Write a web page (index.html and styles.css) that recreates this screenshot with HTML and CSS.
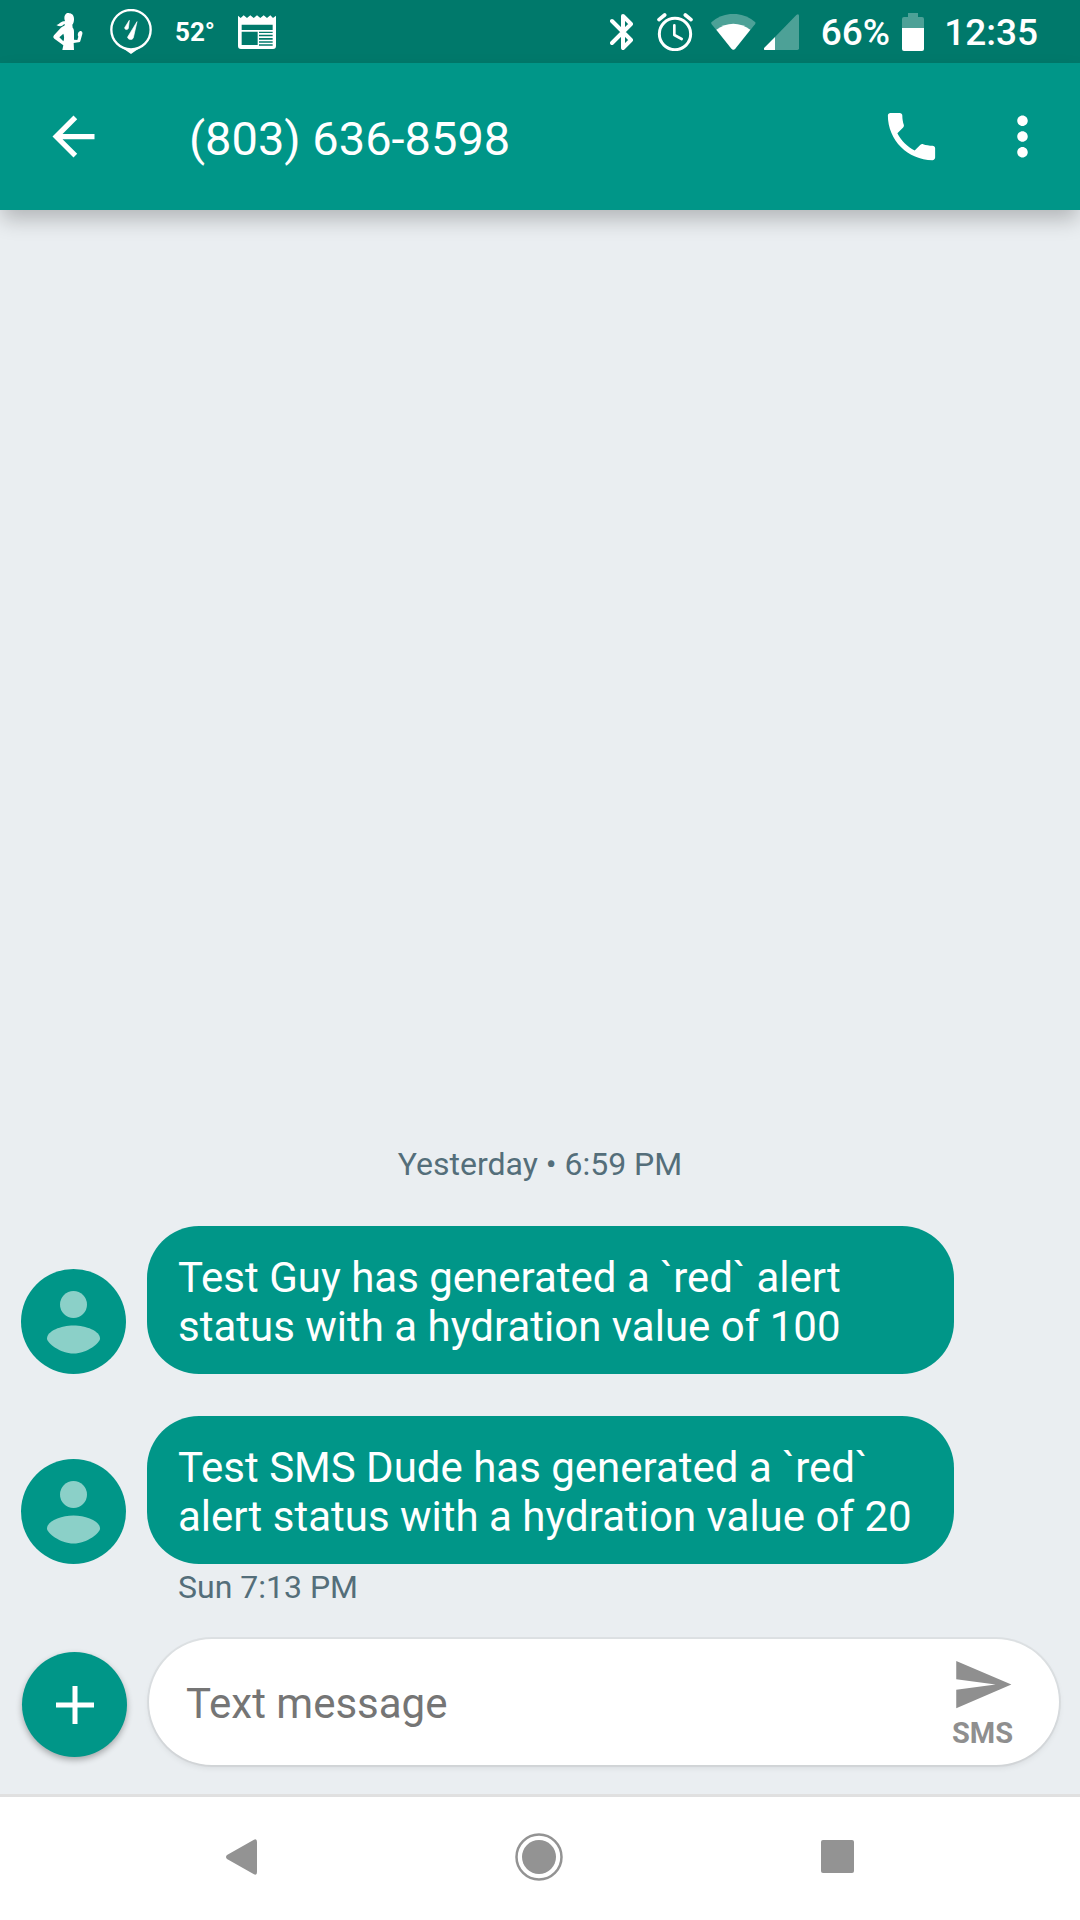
FILE: index.html
```html
<!DOCTYPE html>
<html lang="en">
<head>
<meta charset="utf-8">
<meta name="viewport" content="width=device-width, initial-scale=1">
<title>(803) 636-8598</title>
<link rel="stylesheet" href="styles.css">
</head>
<body>
<div class="screen">
  <div class="status-bar">
    <div class="status-group status-left">
      <svg width="30" height="38" viewBox="70 39 90 114" fill="#fff" aria-hidden="true">
        <path d="M118 40c10 0 15 7 15 17 0 9-2 14-5 17l1 9c3 3 4 6 4 12v24l10 1 3-10c-4-6 0-16 6-17 5-1 7 4 6 9l-6 21c-1 3-3 4-6 4l-14 2 1 21H98l3-14-27-20c-4-3-4-6-1-10l20-22c4-3 6-5 10-6l3-4-3-2c-4 7-12 9-23 3 9-1 12-10 22-11 2 0 3 0 4-1-5-12 0-25 12-25zM101 101l-12 11 12 12c3-7 3-15 0-23z"/>
      </svg>
      <svg class="s-pin" width="42" height="45" viewBox="240 26 126 135" fill="none" stroke="#fff" aria-hidden="true">
        <circle cx="303" cy="88" r="59" stroke-width="7"/>
        <path d="M272 139l31 22 31-22c-18 10-44 10-62 0z" fill="#fff" stroke="none"/>
        <path d="M321 64l-28 46c-1 8 14 11 17 2zM298 60l-14 22c0 6 8 8 11 2z" fill="#fff" stroke="#fff" stroke-width="2" stroke-linejoin="round"/>
      </svg>
      <span class="status-temp">52°</span>
      <svg width="38" height="34" viewBox="625 43 114 102" aria-hidden="true">
        <path fill="#fff" fill-rule="evenodd" d="M625 45l8 7 9-8 10 8 10-8 10 8 10-8 10 8 10-8 10 8 10-8 8 8 9-7v91q0 9-9 9H634q-9 0-9-9zM636 72v16h93V72zM636 93v40h48V93zM688 93v4h41v-4zM688 102v5h41v-5zM688 112v5h41v-5zM688 122v4h41v-4zM688 131v4h41v-4z"/>
      </svg>
    </div>
    <div class="status-group">
      <svg class="s-bt" width="24" height="38" viewBox="0 0 24 38" fill="none" stroke="#fff" stroke-width="4" stroke-linecap="round" stroke-linejoin="round" aria-hidden="true">
        <path d="M2 8l19 19-8 8V3l8 8L2 30"/>
      </svg>
      <svg class="s-alarm" width="36" height="38" viewBox="200 38 108 114" fill="none" stroke="#fff" stroke-linecap="round" stroke-linejoin="round" aria-hidden="true">
        <circle cx="254" cy="101" r="47" stroke-width="9"/>
        <path d="M252 75v29l22 12" stroke-width="8"/>
        <path d="M206 58l17-14M302 58l-17-14" stroke-width="11"/>
      </svg>
      <svg class="s-wifi" width="45" height="36" viewBox="365 39 135 108" fill="#fff" aria-hidden="true">
        <path opacity=".3" d="M366 64c38-34 94-34 132 0q1 3-1 6l-60 74q-5 5-10 0l-60-74q-2-3-1-6z"/>
        <path d="M381 86c31-24 71-24 102 0l-46 58q-5 5-10 0z"/>
      </svg>
      <svg class="s-cell" width="35" height="36" viewBox="522 43 105 108" fill="#fff" aria-hidden="true">
        <path opacity=".3" d="M555 151V112l64-66q8-5 8 3v97q0 5-5 5z"/>
        <path d="M555 112v39h-29q-7-1-3-7z"/>
      </svg>
      <span class="status-text s-pct">66%</span>
      <svg class="s-batt" width="22" height="38" viewBox="0 0 22 38" fill="#fff" aria-hidden="true">
        <path opacity=".3" d="M6 0h10v4h4q2 0 2 2v9H0V6q0-2 2-2h4z"/>
        <path d="M0 15h22v21q0 2-2 2H2q-2 0-2-2z"/>
      </svg>
      <span class="status-text">12:35</span>
    </div>
  </div>

  <header class="app-bar">
    <button class="icon-button" type="button" aria-label="Back">
      <svg class="icon" viewBox="0 0 24 24"><path d="M20 11H7.83l5.59-5.59L12 4l-8 8 8 8 1.41-1.41L7.83 13H20v-2z"/></svg>
    </button>
    <h1 class="title">(803) 636-8598</h1>
    <button class="icon-button" type="button" aria-label="Call">
      <svg class="icon" viewBox="0 0 24 24"><path d="M6.62 10.79c1.44 2.83 3.76 5.14 6.59 6.59l2.2-2.2c.27-.27.67-.36 1.02-.24 1.12.37 2.33.57 3.57.57.55 0 1 .45 1 1V20c0 .55-.45 1-1 1-9.39 0-17-7.61-17-17 0-.55.45-1 1-1h3.5c.55 0 1 .45 1 1 0 1.25.2 2.45.57 3.57.11.35.03.74-.25 1.02l-2.2 2.2z"/></svg>
    </button>
    <button class="icon-button" type="button" aria-label="More options">
      <svg class="icon" viewBox="0 0 24 24"><path d="M12 8c1.100 0 2-.9 2-2s-.9-2-2-2-2 .9-2 2 .9 2 2 2zm0 2c-1.100 0-2 .9-2 2s.9 2 2 2 2-.9 2-2-.9-2-2-2zm0 6c-1.100 0-2 .9-2 2s.9 2 2 2 2-.9 2-2-.9-2-2-2z"/></svg>
    </button>
  </header>

  <main class="thread">
    <p class="thread-date">Yesterday • 6:59 PM</p>
    <article class="message">
      <svg class="avatar" viewBox="0 0 105 105" aria-hidden="true">
        <circle cx="52.500" cy="52.500" r="52.500" fill="#009688"/>
        <g fill="#8bd0c8"><circle cx="52.500" cy="35.500" r="13.500"/><path d="M26 69.500C26 62 40 56.500 52.500 56.500S79 62 79 69.500C79 74 66 84.500 52.500 84.500S26 74 26 69.500z"/></g>
      </svg>
      <p class="bubble">Test Guy has generated a `red` alert status with a hydration value of 100</p>
    </article>
    <article class="message">
      <svg class="avatar" viewBox="0 0 105 105" aria-hidden="true">
        <circle cx="52.500" cy="52.500" r="52.500" fill="#009688"/>
        <g fill="#8bd0c8"><circle cx="52.500" cy="35.500" r="13.500"/><path d="M26 69.500C26 62 40 56.500 52.500 56.500S79 62 79 69.500C79 74 66 84.500 52.500 84.500S26 74 26 69.500z"/></g>
      </svg>
      <p class="bubble">Test SMS Dude has generated a `red` alert status with a hydration value of 20</p>
    </article>
    <p class="message-time">Sun 7:13 PM</p>
  </main>

  <form class="compose">
    <button class="attach" type="button" aria-label="Attach">
      <svg width="38" height="38" viewBox="0 0 38 38" stroke="#fff" stroke-width="5"><path d="M19 0v38M0 19h38"/></svg>
    </button>
    <div class="compose-box">
      <input class="compose-input" type="text" aria-label="Text message" placeholder="Text message">
      <button class="send" type="button">
        <svg class="icon" viewBox="0 0 24 24" aria-hidden="true"><path d="M2 3l21 9-21 9v-7l15-2-15-2z"/></svg>
        <span>SMS</span>
      </button>
    </div>
  </form>

  <nav class="nav-bar">
    <button class="nav-button" type="button" aria-label="Back">
      <svg width="31" height="36" viewBox="0 0 31 36"><path d="M27.500 1Q31-1 31 3v30q0 4-3.500 2L1 20q-2-2 0-4z"/></svg>
    </button>
    <button class="nav-button" type="button" aria-label="Home">
      <svg width="48" height="48" viewBox="0 0 48 48"><circle cx="24" cy="24" r="22.500" fill="none" stroke="#939393" stroke-width="2.500"/><circle cx="24" cy="24" r="17"/></svg>
    </button>
    <button class="nav-button" type="button" aria-label="Recent apps">
      <svg width="33" height="33" viewBox="0 0 33 33"><rect width="33" height="33" rx="2"/></svg>
    </button>
  </nav>
</div>
</body>
</html>
```
FILE: styles.css
```css
* {
  box-sizing: border-box;
}

body {
  margin: 0;
  background: #eaeef1;
  font-family: Roboto, "Liberation Sans", sans-serif;
}

h1,
p {
  margin: 0;
  font-weight: 400;
}

button {
  padding: 0;
  border: 0;
  background: none;
  font: inherit;
}

svg {
  display: block;
  flex: none;
}

.screen {
  display: flex;
  flex-direction: column;
  min-height: 100vh;
}

.status-bar {
  display: flex;
  justify-content: space-between;
  height: 63px;
  padding: 0 42px 0 53px;
  background: #00796b;
  color: #fff;
}

.status-group {
  display: flex;
  align-items: center;
}

.status-left {
  gap: 23px;
}

.s-pin {
  margin-left: 4px;
}

.status-temp {
  font-size: 26px;
  font-weight: 700;
  line-height: 32px;
}

.status-text {
  padding-top: 2px;
  font-size: 37px;
  font-weight: 500;
  line-height: 44px;
}

.s-bt { margin-right: 23px; }
.s-alarm { margin-right: 18px; }
.s-wifi { margin-right: 8px; }
.s-cell { margin-right: 22px; }
.s-pct { margin-right: 12px; }
.s-batt { margin-right: 20px; }

.app-bar {
  position: relative;
  display: flex;
  align-items: center;
  gap: 48px;
  height: 147px;
  padding: 0 26px 0 42px;
  background: #009688;
  color: #fff;
  box-shadow: 0 11px 20px -2px rgba(0, 0, 0, 0.24);
}

.icon {
  width: 63px;
  height: 63px;
  fill: currentColor;
}

.icon-button {
  color: inherit;
}

.title {
  flex: 1;
  padding: 4px 0 0 36px;
  font-size: 47px;
  line-height: 56px;
}

.thread {
  display: flex;
  flex: 1;
  flex-direction: column;
  justify-content: flex-end;
  padding: 32px 126px 20px 21px;
}

.thread-date,
.message-time {
  color: #546e7a;
  font-size: 32px;
  line-height: 38px;
}

.thread-date {
  margin: 0 -105px 43px 0;
  text-align: center;
}

.message {
  display: flex;
  align-items: flex-end;
  gap: 21px;
}

.message + .message {
  margin-top: 42px;
}

.avatar {
  width: 105px;
  height: 105px;
}

.bubble {
  flex: 1;
  padding: 27px 31px 23px;
  border-radius: 52px;
  background: #009688;
  color: #fff;
  font-size: 42px;
  line-height: 49px;
}

.message-time {
  margin: 4px 0 0 157px;
}

.compose {
  display: flex;
  align-items: flex-end;
  gap: 22px;
  padding: 13px 21px 29px 22px;
}

.attach {
  display: grid;
  flex: none;
  place-items: center;
  width: 105px;
  height: 105px;
  margin-bottom: 8px;
  border-radius: 50%;
  background: #009688;
  box-shadow: 0 3px 6px rgba(0, 0, 0, 0.3);
}

.compose-box {
  display: flex;
  flex: 1;
  align-items: center;
  height: 126px;
  padding: 0 45px 0 37px;
  border-radius: 63px;
  background: #fff;
  box-shadow: 0 0 0 2px rgba(0, 0, 0, 0.05), 0 3px 6px rgba(0, 0, 0, 0.08);
}

.compose-input {
  flex: 1;
  min-width: 0;
  padding: 2px 0 0;
  border: 0;
  outline: 0;
  background: none;
  font: inherit;
  font-size: 42px;
  line-height: 49px;
}

.compose-input::placeholder {
  color: #757575;
  opacity: 1;
}

.send {
  display: flex;
  flex-direction: column;
  align-items: center;
  padding-bottom: 2px;
  color: #8f8f8f;
  font-size: 29px;
  font-weight: 700;
  line-height: 34px;
}

.nav-bar {
  display: grid;
  grid-template-columns: repeat(3, 1fr);
  height: 126px;
  padding: 0 94px 4px 92px;
  border-top: 3px solid #e0e0e0;
  background: #fff;
}

.nav-button {
  display: grid;
  place-items: center;
  fill: #939393;
}
```
